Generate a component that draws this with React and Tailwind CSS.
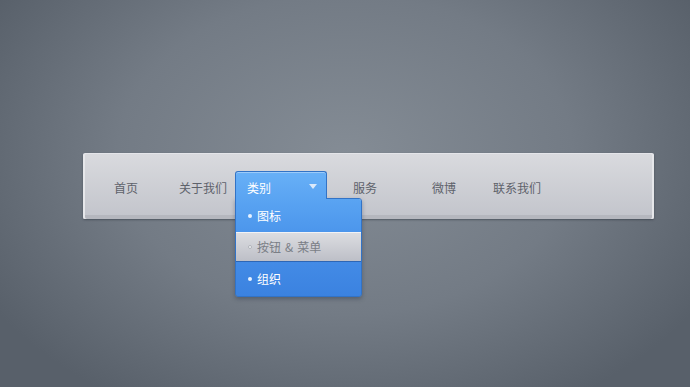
const NAV = [
  { label: "首页", w: "w-[65px]" },
  { label: "关于我们", w: "w-[56px]" },
  { label: "类别", active: true },
  { label: "服务", w: "ml-[26px] w-[79px]" },
  { label: "微博", w: "w-[61px]" },
  { label: "联系我们", w: "w-[60px]" },
];

const MENU = [
  {
    label: "图标",
    row: "h-[33px] bg-linear-to-b from-[#5aa4f2] to-[#4c96ec] text-white",
    dot: "bg-[#e8f2ff]",
  },
  {
    label: (
      <>
        按钮<span className="mx-[4px]">&amp;</span>菜单
      </>
    ),
    key: "btn",
    row: "h-[30px] border-t border-[#f2f3f6] border-b border-b-[#2d66b5] bg-linear-to-b from-[#dcdde1] to-[#bdbfc7] text-[#7a7e86]",
    dot: "bg-[#f4f5f7] border border-[#b0b3ba]",
  },
  {
    label: "组织",
    row: "h-[34px] bg-linear-to-b from-[#438be6] to-[#3b82e0] text-white",
    dot: "bg-[#e8f2ff]",
  },
];

function Dropdown() {
  return (
    <div className="relative mt-[17px] w-[92px] self-start">
      <div className="relative z-10 -mb-px flex h-[28px] items-start justify-between rounded-t-[3px] border border-b-0 border-[#3273c6] bg-linear-to-b from-[#68b0f7] to-[#5aa4f2] pl-[11px] pr-[9px] pt-[8px] text-white shadow-[inset_0_1px_0_rgba(255,255,255,0.35)]">
        <span className="leading-[16px]">类别</span>
        <span className="mt-[4px] h-0 w-0 border-x-[4px] border-t-[5px] border-x-transparent border-t-[#dbe9fa]" />
      </div>
      <div className="absolute left-0 top-[27px] w-[127px] overflow-hidden rounded-b-[3px] rounded-tr-[3px] border border-[#3273c6] shadow-[0_2px_4px_rgba(30,40,60,0.35)]">
        {MENU.map((m) => (
          <div key={m.key || m.label} className={`flex items-center gap-[5px] pl-[12px] ${m.row}`}>
            <span className={`h-[4px] w-[4px] rounded-full ${m.dot}`} />
            <span className="leading-[16px]">{m.label}</span>
          </div>
        ))}
      </div>
    </div>
  );
}

export default function App() {
  return (
    <div className="h-[387px] w-[690px] overflow-hidden bg-[radial-gradient(ellipse_60%_75%_at_50%_40%,#848c95_0%,#737b85_55%,#58606a_100%)] pl-[83px] pt-[153px] font-['Noto_Sans_CJK_SC','Noto_Sans',sans-serif] text-[12px]">
      <div className="h-[66px] w-[571px] rounded-[2px] border-t border-[#e4e5e9] bg-linear-to-b from-[#d9dade] to-[#c2c4cb] shadow-[inset_2px_0_0_#e6e7ea,inset_-2px_0_0_#e6e7ea,inset_0_-4px_0_#b5b7be,0_1px_2px_rgba(40,48,58,0.5)]">
        <div className="flex h-full items-start pl-[31px]">
          {NAV.map((n) =>
            n.active ? (
              <Dropdown key={n.label} />
            ) : (
              <span key={n.label} className={`mt-[26px] shrink-0 leading-[16px] text-[#5e626b] ${n.w}`}>
                {n.label}
              </span>
            )
          )}
        </div>
      </div>
    </div>
  );
}
